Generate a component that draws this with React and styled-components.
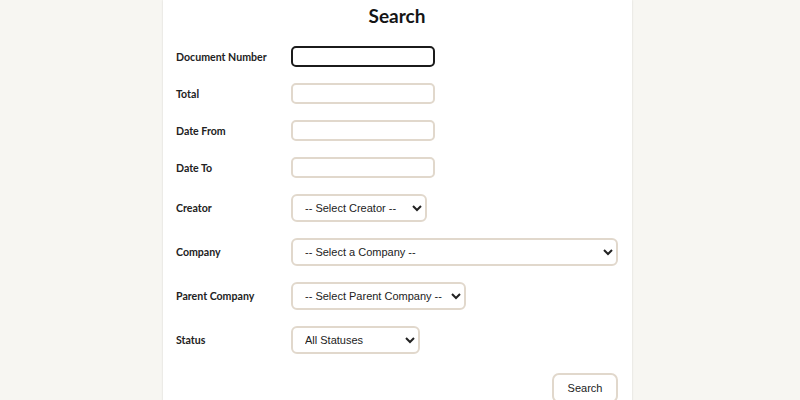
import React from "react";
import styled, { createGlobalStyle } from "styled-components";

const Global = createGlobalStyle`
  html, body { margin: 0; padding: 0; background: #f7f6f2; }
  body { font-family: "Lato", "Liberation Sans", sans-serif; height: 400px; overflow: hidden; }
`;

const Page = styled.div`
  display: flex;
  padding-left: 163px;
  min-height: 400px;
`;

const Panel = styled.main`
  width: 469px;
  background: #ffffff;
  box-shadow: 0 0 2px rgba(0, 0, 0, 0.14);
  padding: 4px 14px 0 13px;
  box-sizing: border-box;
  min-height: 420px;
`;

const Title = styled.h1`
  margin: 0 0 18px;
  text-align: center;
  font-family: "Lato", sans-serif;
  font-weight: 700;
  font-size: 19px;
  line-height: 24px;
  color: #151515;
`;

const Form = styled.form`
  display: grid;
  grid-template-columns: 115px 1fr;
  row-gap: 16px;
  align-items: center;
`;

const Label = styled.label`
  font-family: "Lato", sans-serif;
  font-weight: 700;
  font-size: 10.6px;
  color: #222;
`;

const Field = styled.div`
  display: flex;
`;

const TextInput = styled.input`
  box-sizing: border-box;
  width: 144px;
  height: 21px;
  border: 2px solid ${(p) => (p.$active ? "#1b1b1b" : "#e1d8cc")};
  border-radius: 5px;
  background: #fff;
  font-family: "Liberation Sans", Arial, sans-serif;
  font-size: 11px;
  padding: 0 4px;
  outline: none;
  caret-color: #333;
`;

const Select = styled.select`
  box-sizing: border-box;
  width: ${(p) => p.$w}px;
  height: 28px;
  border: 2px solid #e1d8cc;
  border-radius: 6px;
  background: #fff;
  font-family: "Liberation Sans", Arial, sans-serif;
  font-size: 11px;
  color: #222;
  padding: 0 0 0 8px;
  outline: none;
`;

const Actions = styled.div`
  grid-column: 1 / -1;
  display: flex;
  justify-content: flex-end;
  margin-top: 3px;
`;

const Button = styled.button`
  box-sizing: border-box;
  width: 66px;
  height: 30px;
  border: 2px solid #e1d8cc;
  border-radius: 7px;
  background: #fff;
  font-family: "Liberation Sans", Arial, sans-serif;
  font-size: 11px;
  color: #222;
  padding: 0;
`;

const textFields = [
  { label: "Document Number", active: true },
  { label: "Total" },
  { label: "Date From" },
  { label: "Date To" },
];

const selects = [
  { label: "Creator", text: "-- Select Creator --", w: 136 },
  { label: "Company", text: "-- Select a Company --", w: 327 },
  { label: "Parent Company", text: "-- Select Parent Company --", w: 175 },
  { label: "Status", text: "All Statuses", w: 129 },
];

export default function App() {
  return (
    <>
      <Global />
      <Page>
        <Panel>
          <Title>Search</Title>
          <Form onSubmit={(e) => e.preventDefault()}>
            {textFields.map((f) => (
              <React.Fragment key={f.label}>
                <Label>{f.label}</Label>
                <Field>
                  <TextInput $active={f.active} autoFocus={f.active} />
                </Field>
              </React.Fragment>
            ))}
            {selects.map((s) => (
              <React.Fragment key={s.label}>
                <Label>{s.label}</Label>
                <Field>
                  <Select $w={s.w} defaultValue="">
                    <option value="">{s.text}</option>
                  </Select>
                </Field>
              </React.Fragment>
            ))}
            <Actions>
              <Button type="submit">Search</Button>
            </Actions>
          </Form>
        </Panel>
      </Page>
    </>
  );
}
